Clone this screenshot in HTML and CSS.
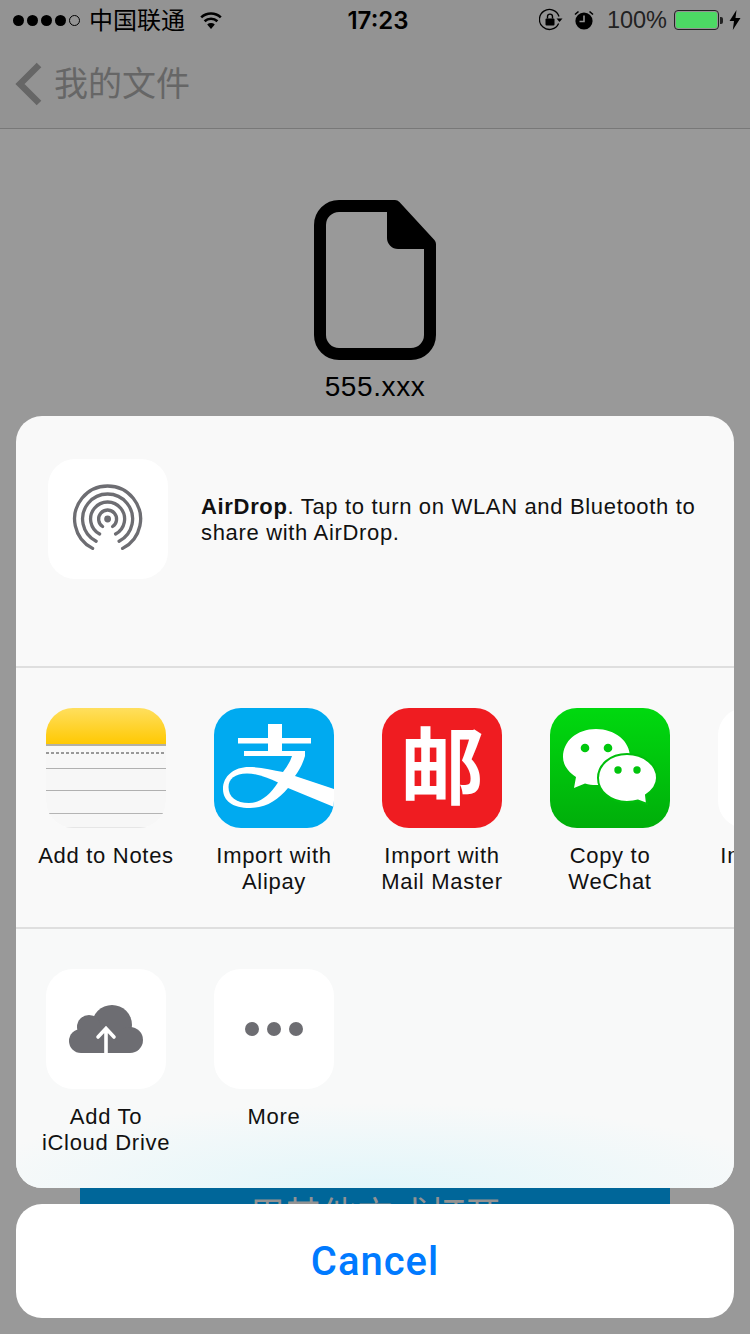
FILE: index.html
```html
<!DOCTYPE html>
<html lang="en">
<head>
    <meta charset="UTF-8">
    <meta name="viewport" content="width=device-width, initial-scale=1.0">
    <title>555.xxx</title>
    <link rel="stylesheet" href="styles.css">
</head>
<body>
    <div class="page">
        <header class="top">
            <div class="status">
                <div class="status-left">
                    <span class="signal"><i></i><i></i><i></i><i></i><i class="off"></i></span>
                    <span class="carrier">中国联通</span>
                    <svg class="wifi" width="26" height="20" viewBox="0 0 26 20">
                        <path d="M13 19 9.2 14.6a5.6 5.6 0 0 1 7.6 0Z" fill="#000"/>
                        <path d="M6.6 11.3a9.4 9.4 0 0 1 12.8 0M3.2 7.4a14.4 14.4 0 0 1 19.6 0" fill="none" stroke="#000" stroke-width="2.6"/>
                    </svg>
                </div>
                <div class="time">17:23</div>
                <div class="status-right">
                    <svg width="24" height="24" viewBox="0 0 24 24">
                        <path d="M19.6 15.5A10 10 0 1 1 20 8.5" fill="none" stroke="#000" stroke-width="1.3"/>
                        <path d="M17.5 10.5h6l-3 3.4Z" fill="#000"/>
                        <rect x="6.5" y="10.5" width="9" height="7" rx="1" fill="#000"/>
                        <path d="M8.5 10.5V8.6a2.5 2.5 0 0 1 5 0v1.9" fill="none" stroke="#000" stroke-width="1.4"/>
                    </svg>
                    <svg class="alarm" width="20" height="20" viewBox="0 0 20 20">
                        <circle cx="10" cy="11" r="8.6" fill="#000"/>
                        <path d="M10 5.5V11.5H5.5" fill="none" stroke="#939393" stroke-width="1.6"/>
                        <path d="M1 4.5 4.5 1.5M19 4.5 15.5 1.5" stroke="#000" stroke-width="1.6"/>
                    </svg>
                    <span class="percent">100%</span>
                    <span class="battery"><span class="battery-fill"></span></span>
                    <span class="battery-nub"></span>
                    <svg class="bolt" width="12" height="20" viewBox="0 0 12 20">
                        <path d="M7.5 0 0.5 11H5L3.8 20 11.5 8H6.5Z" fill="#000"/>
                    </svg>
                </div>
            </div>
            <nav class="nav">
                <svg class="back" width="28" height="44" viewBox="0 0 28 44">
                    <path d="M24 3 5 22 24 41" fill="none" stroke="#666" stroke-width="6.5"/>
                </svg>
                <span class="nav-title">我的文件</span>
            </nav>
        </header>

        <main class="file">
            <svg class="file-icon" width="122" height="160" viewBox="0 0 122 160">
                <path d="M25 6H81L116 44V135A19 19 0 0 1 97 154H25A19 19 0 0 1 6 135V25A19 19 0 0 1 25 6Z" fill="none" stroke="#000" stroke-width="12" stroke-linejoin="round"/>
                <path d="M74 6H81L116 44V48H84A10 10 0 0 1 74 38Z" fill="#000" stroke="#000" stroke-width="2" stroke-linejoin="round"/>
            </svg>
            <div class="file-name">555.xxx</div>
            <div class="open-btn">用其他方式打开</div>
        </main>

        <div class="overlay">
            <div class="sheet">
                <section class="airdrop">
                    <div class="tile">
                        <svg width="120" height="120" viewBox="0 0 120 120">
                            <g fill="none" stroke="#6d6d72" stroke-width="3.3" stroke-linecap="round" transform="translate(59.6 60)">
                                <circle r="3.4" fill="#6d6d72" stroke="none"/>
                                <path d="M-5 7.5A9 9 0 1 1 5 7.5"/>
                                <path d="M-8 15A17 17 0 1 1 8 15"/>
                                <path d="M-11.500 22.200A25 25 0 1 1 11.500 22.200"/>
                                <path d="M-15 29.400A33 33 0 1 1 15 29.400"/>
                            </g>
                        </svg>
                    </div>
                    <p class="airdrop-text"><b>AirDrop</b>. Tap to turn on WLAN and Bluetooth to share with AirDrop.</p>
                </section>

                <section class="apps">
                    <div class="app">
                        <svg class="tile" width="120" height="120" viewBox="0 0 120 120">
                            <defs>
                                <linearGradient id="noteTop" x1="0" y1="0" x2="0" y2="1">
                                    <stop offset="0" stop-color="#ffdf5e"/>
                                    <stop offset="1" stop-color="#ffc800"/>
                                </linearGradient>
                                <linearGradient id="wechatBg" x1="0" y1="0" x2="0" y2="1">
                                    <stop offset="0" stop-color="#00d90f"/>
                                    <stop offset="1" stop-color="#00ae0a"/>
                                </linearGradient>
                            </defs>
                            <rect width="120" height="120" fill="#f7f7f7"/>
                            <rect width="120" height="37" fill="url(#noteTop)"/>
                            <rect y="36" width="120" height="2" fill="#b4b0a4"/>
                            <path d="M0 45H120" stroke="#999" stroke-width="2" stroke-dasharray="3 2"/>
                            <path d="M0 60.500H120M0 82.500H120" stroke="#b0b0b0" stroke-width="1"/>
                            <path d="M3 105.500H117" stroke="#b4b4b4" stroke-width="1"/>
                            <path d="M20 119.500H100" stroke="#e6e6e6" stroke-width="1"/>
                        </svg>
                        <div class="app-label">Add to Notes</div>
                    </div>
                    <div class="app">
                        <svg class="tile" width="120" height="120" viewBox="0 0 120 120">
                            <rect width="120" height="120" fill="#00aaf0"/>
                            <path fill="#fff" d="M54 16H68V30H97V35.500H68V43H91V48C89 55 85.500 62 81 68L120 81V99L74 80C64 92 52 100 36 100C19 100 9 93 9 81C9 68 20 59 35 59C46 59 58 62 69 64C73 59 76 54 78 48H30V43H54V35.500H24V30H54Z"/>
                            <path fill="#00aaf0" d="M64 74.500C54 70 44 65.500 33 65.500C21 65.500 14.500 71 14.500 79C14.500 89 22 95 35 95C46 95 56 87 64 74.500Z"/>
                        </svg>
                        <div class="app-label">Import with Alipay</div>
                    </div>
                    <div class="app">
                        <svg class="tile" width="120" height="120" viewBox="0 0 120 120">
                            <rect width="120" height="120" fill="#ef1c21"/>
                            <text class="mail-glyph" x="60" y="90" text-anchor="middle">邮</text>
                        </svg>
                        <div class="app-label">Import with Mail Master</div>
                    </div>
                    <div class="app">
                        <svg class="tile" width="120" height="120" viewBox="0 0 120 120">
                            <rect width="120" height="120" fill="url(#wechatBg)"/>
                            <path fill="#fff" d="M24 80 26 69C17 63 13 56 13 49C13 33 27 21 46 21C65 21 80 33 80 49C80 65 65 77 46 77C42 77 39 76.500 35 75.500Z"/>
                            <circle cx="35" cy="40" r="4.300" fill="#00c80d"/>
                            <circle cx="58" cy="40" r="4.300" fill="#00c80d"/>
                            <path fill="#fff" stroke="#00be0c" stroke-width="2" d="M97 96 96 87C102 83 107 77 107 70C107 57 94 46 77 46C60 46 48 57 48 70C48 83 60 94 77 94C81 94 85 93.500 88 92.500Z"/>
                            <circle cx="68" cy="62" r="3.700" fill="#00c40c"/>
                            <circle cx="87" cy="62" r="3.700" fill="#00c40c"/>
                        </svg>
                        <div class="app-label">Copy to WeChat</div>
                    </div>
                    <div class="app">
                        <div class="tile"></div>
                        <div class="app-label">Import with</div>
                    </div>
                </section>

                <section class="apps actions">
                    <div class="app">
                        <div class="tile">
                            <svg width="120" height="120" viewBox="0 0 120 120">
                                <g fill="#6d6d72">
                                    <circle cx="66" cy="56" r="20"/>
                                    <circle cx="43" cy="58" r="12"/>
                                    <circle cx="35" cy="72" r="12"/>
                                    <circle cx="84" cy="71" r="13"/>
                                    <rect x="35" y="60" width="49" height="24"/>
                                </g>
                                <path d="M52 68 60 59.500 68 68M60 60V84" fill="none" stroke="#fff" stroke-width="3.600" stroke-linecap="round"/>
                            </svg>
                        </div>
                        <div class="app-label">Add To iCloud Drive</div>
                    </div>
                    <div class="app">
                        <div class="tile">
                            <svg width="120" height="120" viewBox="0 0 120 120">
                                <g fill="#6d6d72">
                                    <circle cx="38" cy="60" r="7"/>
                                    <circle cx="60" cy="60" r="7"/>
                                    <circle cx="82" cy="60" r="7"/>
                                </g>
                            </svg>
                        </div>
                        <div class="app-label">More</div>
                    </div>
                </section>
            </div>
            <div class="cancel">Cancel</div>
        </div>
    </div>
</body>
</html>
```

FILE: styles.css
```css
* { box-sizing: border-box; }
html, body { margin: 0; padding: 0; }
body { font-family: "Liberation Sans", Arial, "Noto Sans CJK SC", sans-serif; color: #000; background: #999; }
.page { position: relative; width: 750px; height: 1334px; overflow: hidden; background: #999; }

.top { height: 129px; background: #939393; border-bottom: 1px solid #787878; }
.status { position: relative; height: 40px; display: flex; align-items: center; justify-content: space-between; padding: 0 9px 0 13px; }
.status-left, .status-right { display: flex; align-items: center; }
.signal { display: flex; gap: 3px; }
.signal i { width: 11px; height: 11px; border-radius: 50%; background: #000; }
.signal i.off { background: none; border: 1px solid #000; }
.carrier { margin: 0 0 4px 9px; font-size: 24px; font-family: "Noto Sans CJK SC", sans-serif; }
.wifi { margin-left: 13px; }
.time { position: absolute; left: 0; right: 0; top: 1px; line-height: 40px; text-align: center; padding-left: 6px; font-size: 24px; font-family: Inter, "Liberation Sans", sans-serif; font-weight: 600; pointer-events: none; }
.alarm { margin-left: 11px; }
.percent { margin-left: 13px; font-size: 23.5px; color: #222; }
.battery { margin-left: 7px; width: 45px; height: 20px; border: 1px solid #222; border-radius: 4px; padding: 1px; display: flex; }
.battery-fill { flex: 1; background: #4cd964; border-radius: 2px; }
.battery-nub { width: 3px; height: 7px; background: #222; border-radius: 0 2px 2px 0; margin-left: 1px; }
.bolt { margin-left: 6px; }

.nav { height: 88px; display: flex; align-items: center; padding: 0 0 0 15px; }
.back { display: block; }
.nav-title { margin: 0 0 6px 11px; font-size: 34px; color: #666; font-family: "Noto Sans CJK SC", sans-serif; }

.file { display: flex; flex-direction: column; align-items: center; padding-top: 71px; }
.file-icon { display: block; filter: blur(0.6px); }
.file-name { margin-top: 10px; font-size: 28px; line-height: 34px; letter-spacing: 0.6px; color: #000; }
.open-btn { margin-top: 766px; width: 590px; height: 100px; flex: none; background: #006699; color: #939393; padding-top: 17px; font-size: 36px; line-height: 50px; font-family: "Noto Sans CJK SC", sans-serif; text-align: center; }

.overlay { position: absolute; left: 0; top: 0; width: 750px; height: 1334px; padding: 416px 16px 16px; display: flex; flex-direction: column; gap: 16px; }
.sheet { height: 772px; flex: none; border-radius: 26px; overflow: hidden; background: #f9f9f9; display: flex; flex-direction: column; }
.cancel { height: 114px; flex: none; background: #fff; border-radius: 26px; display: flex; align-items: center; justify-content: center; font-family: Roboto, "Liberation Sans", sans-serif; font-size: 40px; letter-spacing: 1px; font-weight: 500; color: #007aff; }

.tile { display: block; width: 120px; height: 120px; border-radius: 27px; background: #fff; overflow: hidden; flex: none; }
.tile svg { display: block; }

.airdrop { height: 252px; padding: 43px 32px 0; display: flex; align-items: flex-start; border-bottom: 2px solid #dfdfdf; }
.airdrop-text { margin: 0 0 0 33px; width: 510px; padding-top: 35px; font-size: 22px; line-height: 26px; letter-spacing: 0.67px; color: #111; }
.airdrop-text b { font-weight: 700; }

.apps { height: 261px; padding: 40px 0 0 6px; display: flex; border-bottom: 2px solid #dfdfdf; overflow: hidden; }
.app { width: 168px; flex: none; display: flex; flex-direction: column; align-items: center; }
.app-label { margin-top: 15px; width: 144px; text-align: center; font-size: 22px; line-height: 26px; letter-spacing: 0.7px; color: #111; }
.actions { height: 259px; border-bottom: none; background: radial-gradient(ellipse 420px 85px at 50% 100%, #e2f6fa, rgba(226, 246, 250, 0)), #f8f9f9; }

.mail-glyph { font-family: "Noto Sans CJK SC", sans-serif; font-size: 84px; font-weight: 700; fill: #fff; }
```
